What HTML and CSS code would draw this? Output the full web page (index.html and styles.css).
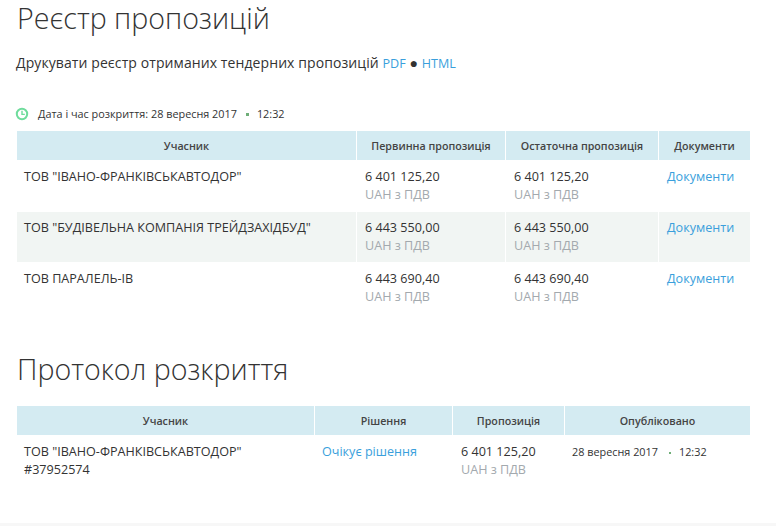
FILE: index.html
```html
<!DOCTYPE html>
<html lang="uk">
<head>
<meta charset="utf-8">
<title>Реєстр пропозицій</title>
<link rel="stylesheet" href="styles.css">
</head>
<body>
<main class="page">
  <h1 class="title">Реєстр пропозицій</h1>
  <p class="print">Друкувати реєстр отриманих тендерних пропозицій <a href="#">PDF</a> ● <a href="#">HTML</a></p>
  <p class="opened">
    <svg class="clock" width="14" height="14" viewBox="0 0 14 14"><circle cx="7" cy="7" r="5.2" fill="none" stroke="#6fdc9c" stroke-width="2"/><path d="M7 3.8V7.4H9.8" fill="none" stroke="#6fdc9c" stroke-width="1.4"/></svg>
    <span>Дата і час розкриття: 28 вересня 2017</span><span class="dot"></span><span>12:32</span>
  </p>
  <table class="grid first">
    <thead><tr><th class="c1">Учасник</th><th class="c2">Первинна пропозиція</th><th class="c3">Остаточна пропозиція</th><th>Документи</th></tr></thead>
    <tbody>
      <tr><td>ТОВ "ІВАНО-ФРАНКІВСЬКАВТОДОР"</td><td>6 401 125,20<small>UAH з ПДВ</small></td><td>6 401 125,20<small>UAH з ПДВ</small></td><td><a href="#">Документи</a></td></tr>
      <tr class="alt"><td>ТОВ "БУДІВЕЛЬНА КОМПАНІЯ ТРЕЙДЗАХІДБУД"</td><td>6 443 550,00<small>UAH з ПДВ</small></td><td>6 443 550,00<small>UAH з ПДВ</small></td><td><a href="#">Документи</a></td></tr>
      <tr><td>ТОВ ПАРАЛЕЛЬ-ІВ</td><td>6 443 690,40<small>UAH з ПДВ</small></td><td>6 443 690,40<small>UAH з ПДВ</small></td><td><a href="#">Документи</a></td></tr>
    </tbody>
  </table>
  <h2 class="title second">Протокол розкриття</h2>
  <table class="grid">
    <thead><tr><th class="p1">Учасник</th><th class="p2">Рішення</th><th class="p3">Пропозиція</th><th>Опубліковано</th></tr></thead>
    <tbody>
      <tr><td>ТОВ "ІВАНО-ФРАНКІВСЬКАВТОДОР"<br>#37952574</td><td class="decision"><a href="#">Очікує рішення</a></td><td>6 401 125,20<small>UAH з ПДВ</small></td><td class="date">28 вересня 2017<span class="dot"></span>12:32</td></tr>
    </tbody>
  </table>
</main>
<div class="foot"></div>
</body>
</html>
```
FILE: styles.css
```css
* { box-sizing: border-box; }
html, body { margin: 0; height: 526px; overflow: hidden; background: #fff; }
body { font-family: "Open Sans", sans-serif; color: #333; font-size: 12.6px; position: relative; }
.page { padding: 0 26px 0 17px; }
.title { margin: 0; font-weight: 300; font-size: 28.6px; line-height: 36px; color: #333; }
.print { margin: 17px 0 0 -1px; font-size: 14px; letter-spacing: 0.09px; line-height: 20px; }
.print a { font-size: 12.6px; line-height: 1; letter-spacing: 0; }
a { color: #3a9fdc; text-decoration: none; }
.opened { margin: 33px 0 0 -2px; display: flex; align-items: center; font-size: 10.85px; line-height: 16px; height: 16px; }
.clock { margin-right: 9px; }
.dot { display: inline-block; width: 3px; height: 3px; margin: 0 7.5px 0 9.5px; background: #6fae78; vertical-align: 2px; }
.grid { width: 100%; border-collapse: separate; border-spacing: 0; table-layout: fixed; }
.first { margin-top: 9px; }
th { background: #d4ebf2; color: #444; font-size: 10.7px; font-weight: 600; height: 29px; padding: 0; text-align: center; border-left: 1px solid #fff; }
th:first-child, td:first-child { border-left: 0; }
td { vertical-align: top; padding: 7px 8px 0; height: 51px; line-height: 18px; border-left: 1px solid #fff; border-top: 1px solid #fff; }
td:first-child { padding-left: 7px; }
td small { display: block; color: #a3a9ae; font-size: inherit; }
.alt td { background: #f1f5f3; }
.c1 { width: 339px; } .c2 { width: 149px; } .c3 { width: 153px; }
.p1 { width: 297px; } .p2 { width: 138px; } .p3 { width: 112px; }
.second { margin-top: 36px; line-height: 40px; }
h2 + .grid { margin-top: 17px; }
td.decision { padding-left: 7px; }
.date { font-size: 10.85px; padding-left: 7px; }
.date .dot { width: 2px; height: 2px; margin: 0 8px 0 11px; }
.foot { position: absolute; left: 0; right: 0; bottom: 0; height: 3px; background: #f7f7f7; }
```
